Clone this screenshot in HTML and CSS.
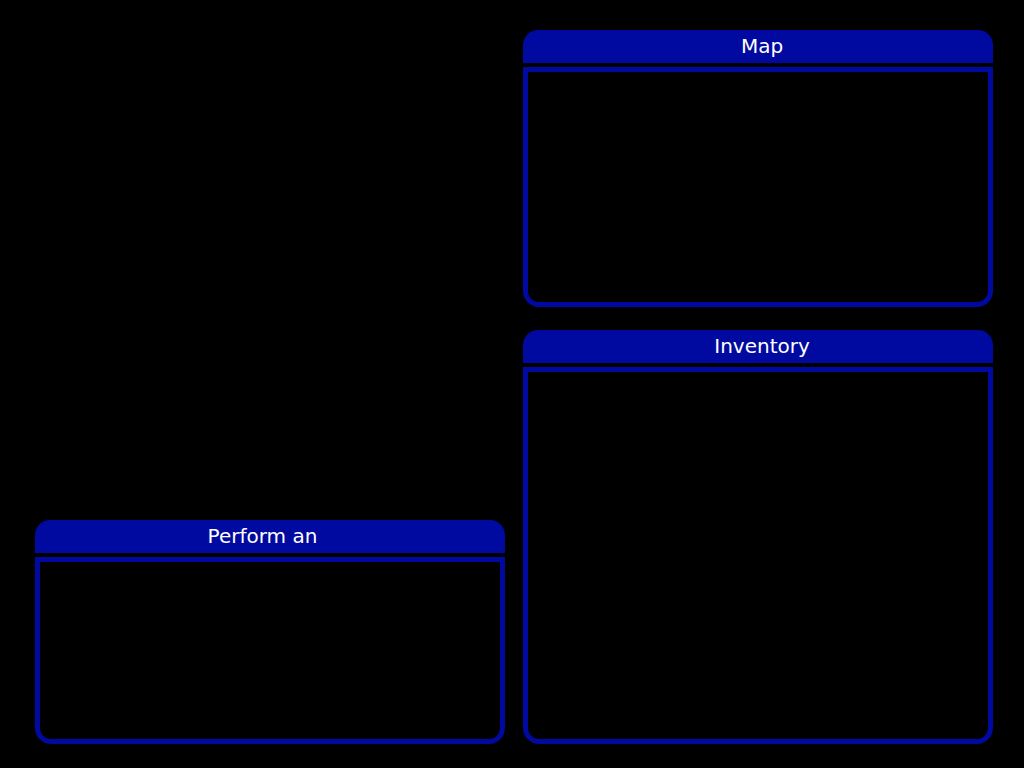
FILE: index.html
```html
<!DOCTYPE html>
<html lang="en">
<head>
    <meta charset="UTF-8">
    <title>Panels</title>
    <link rel="stylesheet" href="styles.css">
</head>
<body>
    <div class="desk">
        <div class="col col-left">
            <div class="panel panel-perform">
                <div class="panel-head">Perform an</div>
                <div class="panel-body"></div>
            </div>
        </div>
        <div class="col col-right">
            <div class="panel panel-map">
                <div class="panel-head">Map</div>
                <div class="panel-body"></div>
            </div>
            <div class="panel panel-inventory">
                <div class="panel-head">Inventory</div>
                <div class="panel-body"></div>
            </div>
        </div>
    </div>
</body>
</html>
```

FILE: styles.css
```css
html, body
{
    margin: 0;
    background: #000;
}
.desk
{
    display: grid;
    grid-template-columns: 470px 470px;
    column-gap: 18px;
    padding: 30px 0 0 35px;
    height: 714px;
}
.col
{
    display: flex;
    flex-direction: column;
}
.col-left
{
    justify-content: flex-end;
}
.col-right
{
    gap: 23px;
}
.panel
{
    display: flex;
    flex-direction: column;
}
.panel-head
{
    height: 33px;
    line-height: 33px;
    background: #0009a0;
    color: #fff;
    text-align: center;
    font-family: "DejaVu Sans", sans-serif;
    font-size: 20px;
    border-radius: 15px 15px 0 0;
    margin-bottom: 4px;
}
.panel-body
{
    flex: 1;
    border: 5px solid #0009a0;
    border-radius: 0 0 16px 16px;
}
.panel-map .panel-head, .panel-inventory .panel-head
{
    padding-left: 8px;
}
.panel-perform .panel-head
{
    padding-right: 15px;
}
.panel-map
{
    height: 277px;
}
.panel-inventory
{
    flex: 1;
}
.panel-perform
{
    height: 224px;
}
```
